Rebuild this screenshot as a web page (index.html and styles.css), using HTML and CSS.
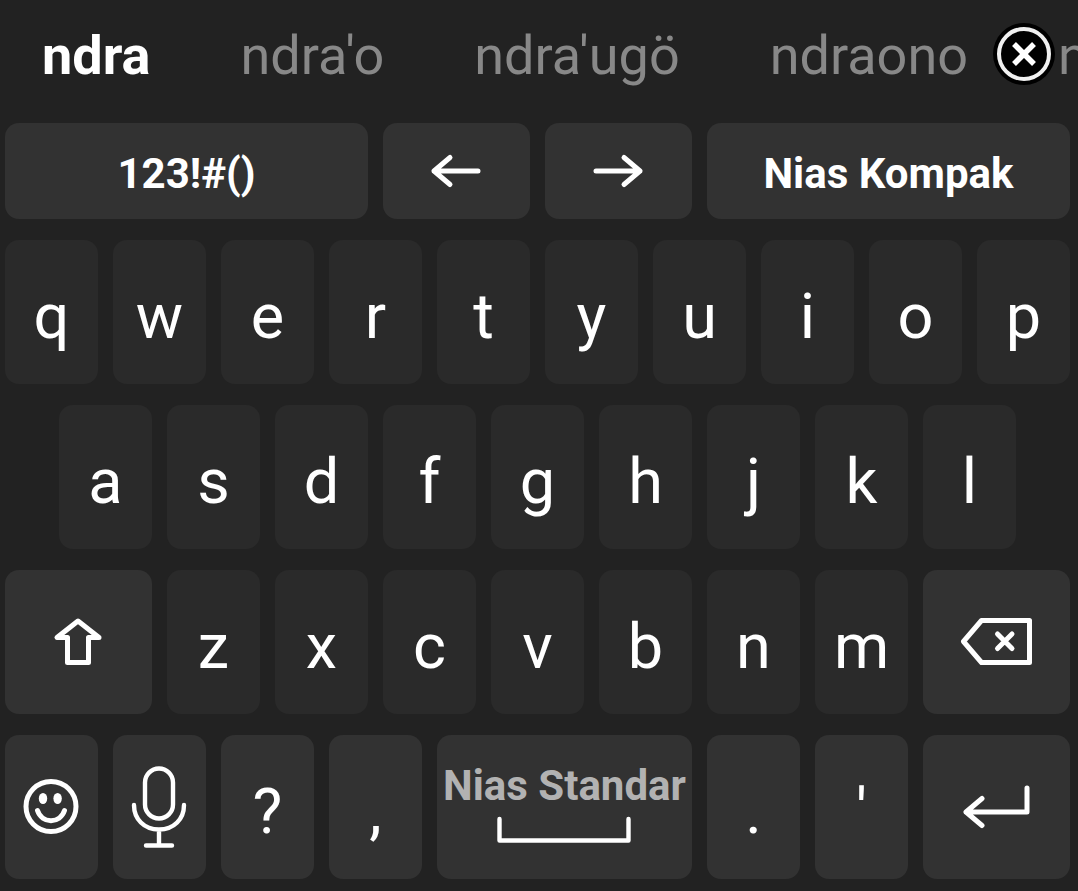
FILE: index.html
```
<!DOCTYPE html>
<html lang="nia">
<head>
<meta charset="utf-8">
<meta name="viewport" content="width=device-width, initial-scale=1">
<title>Nias keyboard</title>
<link rel="stylesheet" href="styles.css">
</head>
<body>
<main class="keyboard">
  <div class="suggestions">
    <div class="suggestion-list">
      <button class="suggestion suggestion-main">ndra</button>
      <button class="suggestion">ndra'o</button>
      <button class="suggestion">ndra'ugö</button>
      <button class="suggestion">ndraono</button>
      <button class="suggestion">n</button>
    </div>
    <button class="close" aria-label="Close suggestions">
      <svg width="62" height="62" viewBox="0 0 62 62"><circle cx="31" cy="31" r="31" fill="#000"/><circle cx="31" cy="31" r="25" fill="none" stroke="#f0f0f0" stroke-width="4"/><path d="M21 21L41 41M41 21L21 41" stroke="#fff" stroke-width="5.5"/></svg>
    </button>
  </div>
  <div class="row row-top">
    <button class="key dark w7"><span class="label">123!#()</span></button>
    <button class="key dark w3" aria-label="Left"><svg class="icon" width="53" height="36" viewBox="0 0 53 36"><path d="M4 18H48M20 4.500L4 18L20 31.500"/></svg></button>
    <button class="key dark w3" aria-label="Right"><svg class="icon" width="53" height="36" viewBox="0 0 53 36"><path d="M4 18H48M32 4.500L48 18L32 31.500"/></svg></button>
    <button class="key dark w7"><span class="label">Nias Kompak</span></button>
  </div>
  <div class="row">
    <button class="key"><span class="char">q</span></button>
    <button class="key"><span class="char">w</span></button>
    <button class="key"><span class="char">e</span></button>
    <button class="key"><span class="char">r</span></button>
    <button class="key"><span class="char">t</span></button>
    <button class="key"><span class="char">y</span></button>
    <button class="key"><span class="char">u</span></button>
    <button class="key"><span class="char">i</span></button>
    <button class="key"><span class="char">o</span></button>
    <button class="key"><span class="char">p</span></button>
  </div>
  <div class="row">
    <button class="key indent"><span class="char">a</span></button>
    <button class="key"><span class="char">s</span></button>
    <button class="key"><span class="char">d</span></button>
    <button class="key"><span class="char">f</span></button>
    <button class="key"><span class="char">g</span></button>
    <button class="key"><span class="char">h</span></button>
    <button class="key"><span class="char">j</span></button>
    <button class="key"><span class="char">k</span></button>
    <button class="key"><span class="char">l</span></button>
  </div>
  <div class="row">
    <button class="key dark w3" aria-label="Shift"><svg class="icon" width="51" height="50" viewBox="0 0 51 50"><path d="M25 4L4 20.500H14.500V45.500H35.500V20.500H46Z"/></svg></button>
    <button class="key"><span class="char">z</span></button>
    <button class="key"><span class="char">x</span></button>
    <button class="key"><span class="char">c</span></button>
    <button class="key"><span class="char">v</span></button>
    <button class="key"><span class="char">b</span></button>
    <button class="key"><span class="char">n</span></button>
    <button class="key"><span class="char">m</span></button>
    <button class="key dark w3" aria-label="Backspace"><svg class="icon" width="75" height="50" viewBox="0 0 75 50"><path d="M22.500 3.500H70.500V45.500H22.500L4.500 24.500Z"/><path d="M38.500 17L53 31.500M53 17L38.500 31.500"/></svg></button>
  </div>
  <div class="row">
    <button class="key dark" aria-label="Emoji"><svg class="icon" width="57" height="56" viewBox="0 0 57 56"><circle cx="28" cy="27.500" r="25"/><ellipse class="solid" cx="20" cy="19.500" rx="4.200" ry="5.500"/><ellipse class="solid" cx="34.600" cy="19.500" rx="4.200" ry="5.500"/><path d="M14.500 31.500C19 45 37 45 41.500 31.500"/></svg></button>
    <button class="key dark" aria-label="Voice input"><svg class="icon icon-thin" width="57" height="84" viewBox="0 0 57 84"><rect x="14" y="3.500" width="28" height="50" rx="14"/><path d="M3 40C3 54 13 64.500 28 64.500S53 54 53 40M28 64.500V80.500M15 80.500H41"/></svg></button>
    <button class="key dark"><span class="char">?</span></button>
    <button class="key dark"><span class="char">,</span></button>
    <button class="key dark space w5"><span class="language">Nias Standar</span><svg class="icon icon-thin" width="135" height="28" viewBox="0 0 135 28"><path d="M2.500 3V24.500H131.500V3"/></svg></button>
    <button class="key dark"><span class="char">.</span></button>
    <button class="key dark"><span class="char">'</span></button>
    <button class="key dark w3" aria-label="Enter"><svg class="icon" width="69" height="44" viewBox="0 0 69 44"><path d="M65 3V27H4M20 13.500L4 27L20 40.500"/></svg></button>
  </div>
</main>
</body>
</html>
```
FILE: styles.css
```
* {
  box-sizing: border-box;
}

body {
  margin: 0;
  background: #222222;
  color: #ffffff;
  font-family: Roboto, "Noto Sans", sans-serif;
}

button {
  border: 0;
  padding: 0;
  background: none;
  color: inherit;
  font: inherit;
  cursor: pointer;
}

.keyboard {
  display: flex;
  flex-direction: column;
  gap: 21px;
  padding-bottom: 12px;
  overflow: hidden;
}

.suggestions {
  position: relative;
  height: 102px;
}

.suggestion-list {
  display: flex;
  overflow: hidden;
  padding-top: 20px;
}

.suggestion {
  flex: none;
  padding: 0 45px;
  color: #888888;
  font-size: 54px;
  line-height: 72px;
}

.suggestion-main {
  padding-left: 42px;
  color: #ffffff;
  font-weight: 700;
}

.close {
  position: absolute;
  top: 23px;
  right: 23px;
}

.close svg {
  display: block;
}

.row {
  display: grid;
  grid-template-columns: repeat(20, minmax(0, 1fr));
  gap: 15px;
  height: 144px;
  padding: 0 8px 0 5px;
}

.row-top {
  height: 96px;
}

.key {
  grid-column-end: span 2;
  display: flex;
  align-items: center;
  justify-content: center;
  border-radius: 14px;
  background: #2a2a2a;
}

.dark {
  background: #323232;
}

.w3 {
  grid-column-end: span 3;
}

.w5 {
  grid-column-end: span 5;
}

.w7 {
  grid-column-end: span 7;
}

.indent {
  grid-column-start: 2;
}

.char {
  padding-top: 10px;
  font-size: 63px;
  line-height: 72px;
}

.label {
  padding-top: 4px;
  font-size: 42px;
  font-weight: 700;
}

.space {
  flex-direction: column;
  gap: 6px;
  padding-bottom: 10px;
}

.language {
  color: #b2b2b2;
  font-size: 42px;
  font-weight: 700;
  line-height: 49px;
  white-space: nowrap;
}

.icon {
  fill: none;
  stroke: #ffffff;
  stroke-width: 5;
  stroke-linecap: round;
  stroke-linejoin: round;
}

.icon-thin {
  stroke-width: 4.4;
}

.solid {
  fill: #ffffff;
  stroke: none;
}
```
